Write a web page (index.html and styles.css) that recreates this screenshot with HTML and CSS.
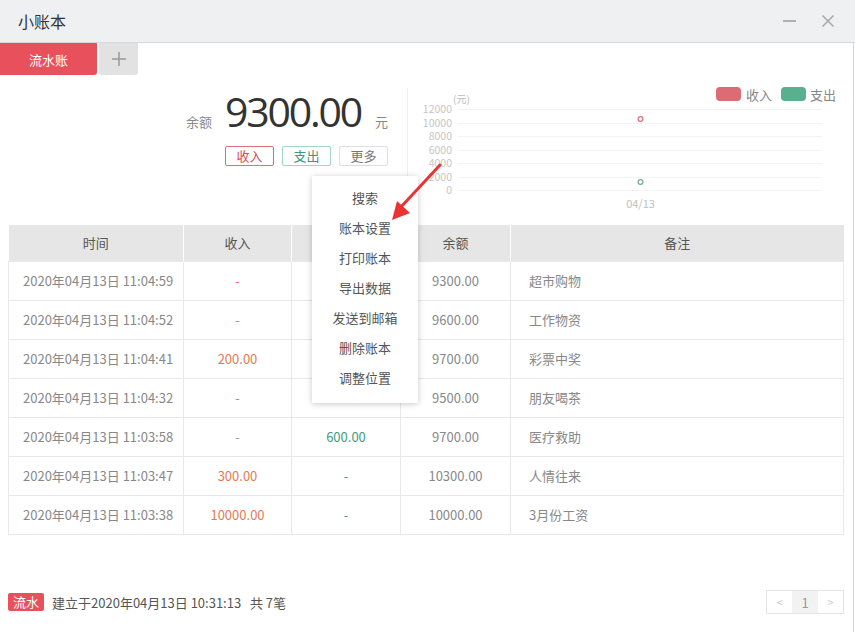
FILE: index.html
```html
<!DOCTYPE html>
<html lang="zh">
<head>
<meta charset="utf-8">
<title>小账本</title>
<link rel="stylesheet" href="styles.css">
</head>
<body>
<div class="app">
  <header class="titlebar">
    <span class="title">小账本</span>
    <div class="controls">
      <span class="ctl-min"></span>
      <svg class="ctl-close" width="14" height="14" viewBox="0 0 14 14"><path d="M1.5 1.5 L12.5 12.5 M12.5 1.5 L1.5 12.5" stroke="#a9a9a9" stroke-width="1.6" fill="none"/></svg>
    </div>
  </header>
  <div class="main">
    <nav class="tabs">
      <div class="tab active">流水账</div>
      <div class="tab add">
        <svg width="16" height="16" viewBox="0 0 16 16"><path d="M8 1 V15 M1 8 H15" stroke="#999" stroke-width="1.5" fill="none"/></svg>
      </div>
    </nav>
    <section class="summary">
      <div class="balance-box">
        <div class="balance-line">
          <span class="lbl">余额</span>
          <span class="amount">9300.00</span>
          <span class="unit">元</span>
        </div>
        <div class="actions">
          <button class="btn btn-in">收入</button>
          <button class="btn btn-out">支出</button>
          <button class="btn btn-more">更多</button>
        </div>
      </div>
      <div class="divider"></div>
      <div class="chart">
        <svg width="447" height="150" viewBox="0 0 447 150">
          <rect x="308" y="12" width="25" height="14" rx="4" fill="#dd6b73"/>
          <text x="338" y="24.5" class="legend">收入</text>
          <rect x="373" y="12" width="25" height="14" rx="4" fill="#58b08f"/>
          <text x="402" y="24.5" class="legend">支出</text>
          <text x="45" y="28" class="unit-lbl">(元)</text>
          <g stroke="#f3f3f3" stroke-width="1">
            <line x1="50" y1="34.5" x2="414" y2="34.5"/>
            <line x1="50" y1="48.5" x2="414" y2="48.5"/>
            <line x1="50" y1="61.5" x2="414" y2="61.5"/>
            <line x1="50" y1="75.5" x2="414" y2="75.5"/>
            <line x1="50" y1="88.5" x2="414" y2="88.5"/>
            <line x1="50" y1="102.5" x2="414" y2="102.5"/>
            <line x1="50" y1="115.5" x2="414" y2="115.5"/>
          </g>
          <g class="ylab" text-anchor="end">
            <text x="44" y="38">12000</text>
            <text x="44" y="52">10000</text>
            <text x="44" y="65">8000</text>
            <text x="44" y="79">6000</text>
            <text x="44" y="92">4000</text>
            <text x="44" y="106">2000</text>
            <text x="44" y="119">0</text>
          </g>
          <circle cx="232.5" cy="44" r="2.4" fill="#fff" stroke="#d9707a" stroke-width="1.2"/>
          <circle cx="232.5" cy="107" r="2.4" fill="#fff" stroke="#6fae9a" stroke-width="1.2"/>
          <text x="232.5" y="133" text-anchor="middle" class="xlab">04/13</text>
        </svg>
      </div>
    </section>
    <table class="ledger">
      <colgroup>
        <col class="c-time"><col class="c-in"><col class="c-out"><col class="c-bal"><col class="c-note">
      </colgroup>
      <thead>
        <tr><th>时间</th><th>收入</th><th>支出</th><th>余额</th><th>备注</th></tr>
      </thead>
      <tbody>
        <tr><td class="time">2020年04月13日 11:04:59</td><td class="dash-r">-</td><td class="out"></td><td>9300.00</td><td class="note">超市购物</td></tr>
        <tr><td class="time">2020年04月13日 11:04:52</td><td class="dash-r">-</td><td class="out"></td><td>9600.00</td><td class="note">工作物资</td></tr>
        <tr><td class="time">2020年04月13日 11:04:41</td><td class="in">200.00</td><td class="out"></td><td>9700.00</td><td class="note">彩票中奖</td></tr>
        <tr><td class="time">2020年04月13日 11:04:32</td><td class="dash-r">-</td><td class="out"></td><td>9500.00</td><td class="note">朋友喝茶</td></tr>
        <tr><td class="time">2020年04月13日 11:03:58</td><td class="dash-g">-</td><td class="out">600.00</td><td>9700.00</td><td class="note">医疗救助</td></tr>
        <tr><td class="time">2020年04月13日 11:03:47</td><td class="in">300.00</td><td class="out">-</td><td>10300.00</td><td class="note">人情往来</td></tr>
        <tr><td class="time">2020年04月13日 11:03:38</td><td class="in">10000.00</td><td class="out">-</td><td>10000.00</td><td class="note">3月份工资</td></tr>
      </tbody>
    </table>
    <div class="spacer"></div>
    <footer class="footer">
      <div class="info">
        <span class="badge">流水</span>
        <span class="meta">建立于2020年04月13日 10:31:13&nbsp;&nbsp;&nbsp;共 7笔</span>
      </div>
      <div class="pager">
        <span class="pg arrow">&lt;</span>
        <span class="pg cur">1</span>
        <span class="pg arrow">&gt;</span>
      </div>
    </footer>

    <ul class="menu">
      <li>搜索</li>
      <li>账本设置</li>
      <li>打印账本</li>
      <li>导出数据</li>
      <li>发送到邮箱</li>
      <li>删除账本</li>
      <li>调整位置</li>
    </ul>
    <svg class="pointer" width="70" height="70" viewBox="0 0 70 70">
      <path d="M56 2 L16 45" stroke="#ec3333" stroke-width="3" stroke-linecap="round" fill="none"/>
      <polygon points="8,57 13,38 26,50" fill="#ec3333"/>
    </svg>
  </div>
</div>
</body>
</html>
```

FILE: styles.css
```css
* { box-sizing: border-box; }
html, body { margin: 0; padding: 0; }
body {
  font-family: "Noto Sans CJK SC", "Noto Sans", sans-serif;
  font-size: 13px;
  color: #666;
  background: #fff;
}
.app {
  width: 855px;
  height: 632px;
  display: flex;
  flex-direction: column;
  overflow: hidden;
}
.titlebar {
  height: 43px;
  flex: none;
  background: #eff0f1;
  border-bottom: 1px solid #d6d8da;
  display: flex;
  align-items: center;
  justify-content: space-between;
  padding: 0 20px 0 18px;
}
.title { font-size: 16px; color: #333; }
.controls { display: flex; align-items: center; gap: 25px; }
.ctl-min { width: 13px; height: 2px; background: #b0b0b0; display: block; }
.ctl-close { display: block; }

.main {
  position: relative;
  flex: 1;
  display: flex;
  flex-direction: column;
  border-right: 1px solid #bfe2c2;
  margin-right: 1px;
}
.tabs { display: flex; height: 32px; flex: none; gap: 2px; }
.tab {
  height: 32px;
  display: flex;
  align-items: center;
  justify-content: center;
}
.tab.active {
  width: 97px;
  background: #e8505b;
  color: #fff;
  border-bottom-right-radius: 3px;
}
.tab.add {
  width: 39px;
  background: #e2e2e2;
  border-bottom-right-radius: 3px;
  border-bottom-left-radius: 3px;
}

.summary { height: 150px; flex: none; display: flex; }
.balance-box {
  flex: none;
  width: 407px;
  display: flex;
  flex-direction: column;
  align-items: flex-end;
  padding: 10px 19px 0 0;
}
.balance-line { display: flex; align-items: baseline; height: 52px; }
.lbl { color: #888; font-size: 13px; margin-right: 13px; }
.amount {
  font-family: "Open Sans", "Noto Sans", sans-serif;
  font-size: 41px;
  line-height: 52px;
  color: #333;
  letter-spacing: -2.2px;
}
.unit { color: #888; font-size: 13px; margin-left: 14px; }
.actions { display: flex; gap: 8px; margin-top: 9px; }
.btn {
  width: 49px;
  height: 20px;
  padding: 0;
  font-family: inherit;
  font-size: 13px;
  line-height: 18px;
  background: #fff;
  border: 1px solid #ddd;
  border-radius: 2px;
  color: #777;
}
.btn-in { border-color: #d9707a; color: #d24b5a; }
.btn-out { border-color: #9fd4c6; color: #3a9a80; }
.btn-more { border-color: #dedede; color: #777; }
.divider { flex: none; width: 1px; background: #eeeeee; margin: 13px 0 40px; }
.chart { flex: 1; min-width: 0; overflow: hidden; }
.chart svg { display: block; }
.legend { font-size: 13px; fill: #888; }
.unit-lbl { font-size: 10px; fill: #bbb; }
.ylab text { font-size: 10.5px; fill: #c6c6c6; }
.xlab { font-size: 11px; fill: #c0c0c0; }

.ledger {
  margin: 0 10px 0 8px;
  width: 835px;
  border-collapse: collapse;
  table-layout: fixed;
  flex: none;
}
.c-time { width: 175px; }
.c-in { width: 108px; }
.c-out { width: 109px; }
.c-bal { width: 110px; }
.c-note { width: 333px; }
.ledger th {
  height: 36px;
  background: #e6e6e6;
  font-weight: normal;
  color: #555;
  border-left: 1px solid #fff;
  padding: 0;
}
.ledger th:first-child { border-left: none; }
.ledger td {
  height: 39px;
  border: 1px solid #e8e8e8;
  text-align: center;
  color: #888;
  padding: 0;
}
.ledger td.time { text-align: left; padding-left: 14px; }
.ledger td.note { text-align: left; padding-left: 18px; }
.ledger td.in { color: #e57a52; }
.ledger td.dash-r { color: #e07070; }
.ledger td.dash-g { color: #999; }
.ledger td.out { color: #3f9a7f; }

.spacer { flex: 1; }
.footer {
  flex: none;
  height: 24px;
  margin: 0 9px 18px 8px;
  display: flex;
  align-items: center;
  justify-content: space-between;
}
.info { display: flex; align-items: center; }
.badge {
  background: #e8505b;
  color: #fff;
  height: 18px;
  line-height: 18px;
  padding: 0 5px;
  border-radius: 2px;
  font-size: 13px;
  margin-right: 8px;
}
.meta { color: #555; }
.pager { display: flex; border: 1px solid #e3e3e3; height: 24px; }
.pg {
  width: 25px;
  display: flex;
  align-items: center;
  justify-content: center;
  color: #ccc;
  font-size: 11px;
}
.pg.cur { width: 26px; background: #f2f2f2; color: #999; font-size: 13px; }

.menu {
  position: absolute;
  left: 312px;
  top: 133px;
  width: 106px;
  margin: 0;
  padding: 7px 0 10px;
  list-style: none;
  background: #fff;
  box-shadow: 0 1px 6px rgba(0,0,0,0.22);
  z-index: 5;
}
.menu li {
  height: 30px;
  line-height: 30px;
  text-align: center;
  color: #555;
}
.pointer {
  position: absolute;
  left: 384px;
  top: 120px;
  z-index: 6;
}
```
